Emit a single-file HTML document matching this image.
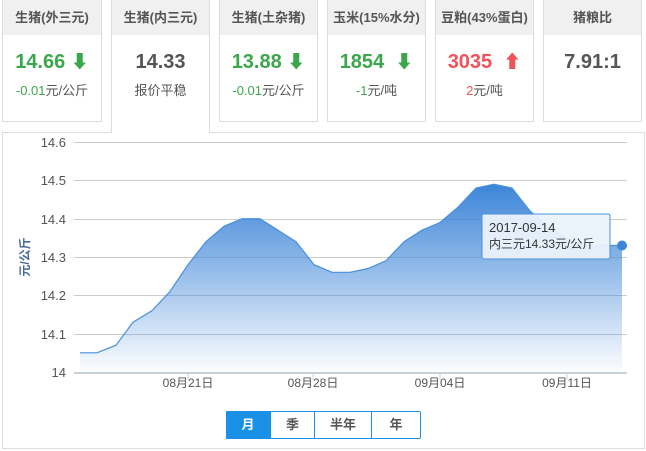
<!DOCTYPE html>
<html><head><meta charset="utf-8"><style>
body{margin:0;width:646px;height:451px;background:#fff;font-family:"Liberation Sans","Noto Sans CJK SC",sans-serif;position:relative;overflow:hidden}
.card{position:absolute;top:0;height:122px;border:1px solid #ddd;border-top:none;background:#fff;text-align:center;box-sizing:border-box}
.card .h{height:35px;background:#f0f0f0;line-height:36px;font-size:13px;font-weight:bold;color:#555}
.card .v{margin-top:13px;font-size:20px;font-weight:bold;height:28px;line-height:28px}
.card .s{font-size:13px;color:#555;margin-top:4px}
.g{color:#3aa84a}.r{color:#f0535a}.k{color:#555}
.sel{height:133px;border-bottom:none;z-index:2}
.box{position:absolute;left:2px;top:132px;width:643px;height:317px;border:1px solid #ddd;box-sizing:border-box}
.btns{position:absolute;left:226px;top:411px;height:28px;display:flex;border:1px solid #1a90e6;border-radius:2px;box-sizing:border-box;width:195px}
.btns div{text-align:center;line-height:26px;font-size:13px;font-weight:bold;color:#555;border-right:1px solid #1a90e6;box-sizing:border-box}
</style></head><body>
<div class="card" style="left:2px;width:100px"><div class="h">生猪(外三元)</div><div class="v g">14.66 <span style="font-size:18px">⬇</span></div><div class="s"><span class="g">-0.01</span>元/公斤</div></div>
<div class="card sel" style="left:111px;width:99px"><div class="h">生猪(内三元)</div><div class="v k">14.33</div><div class="s">报价平稳</div></div>
<div class="card" style="left:219px;width:99px"><div class="h">生猪(土杂猪)</div><div class="v g">13.88 <span style="font-size:18px">⬇</span></div><div class="s"><span class="g">-0.01</span>元/公斤</div></div>
<div class="card" style="left:327px;width:99px"><div class="h">玉米(15%水分)</div><div class="v g">1854 &nbsp;<span style="font-size:18px">⬇</span></div><div class="s"><span class="g">-1</span>元/吨</div></div>
<div class="card" style="left:435px;width:99px"><div class="h">豆粕(43%蛋白)</div><div class="v r">3035 &nbsp;<span style="font-size:18px">⬆</span></div><div class="s"><span class="r">2</span>元/吨</div></div>
<div class="card" style="left:543px;width:99px"><div class="h">猪粮比</div><div class="v k">7.91:1</div></div>
<div class="box"></div>
<svg width="646" height="451" style="position:absolute;left:0;top:0;z-index:3" font-family="Liberation Sans,Noto Sans CJK SC,sans-serif">
<defs><linearGradient id="gr" x1="0" y1="0" x2="0" y2="1"><stop offset="0" stop-color="#3d85d8"/><stop offset="1" stop-color="#3d85d8" stop-opacity="0.02"/></linearGradient></defs>
<g stroke="#ccc" stroke-width="1">
<line x1="74" y1="142.5" x2="627" y2="142.5"/><line x1="74" y1="180.5" x2="627" y2="180.5"/><line x1="74" y1="219.5" x2="627" y2="219.5"/><line x1="74" y1="257.5" x2="627" y2="257.5"/><line x1="74" y1="295.5" x2="627" y2="295.5"/><line x1="74" y1="334.5" x2="627" y2="334.5"/><line x1="74" y1="372.5" x2="627" y2="372.5"/>
</g>
<g font-size="13" fill="#555" text-anchor="end"><text x="66" y="147">14.6</text><text x="66" y="185">14.5</text><text x="66" y="224">14.4</text><text x="66" y="262">14.3</text><text x="66" y="300">14.2</text><text x="66" y="339">14.1</text><text x="66" y="377">14</text></g>
<text transform="translate(29,257) rotate(-90)" text-anchor="middle" font-size="12" font-weight="bold" fill="#4a6a9a">元/公斤</text>
<path d="M80,372 L80,352.8 L97,352.8 L116,345.2 L133,322.2 L152,310.7 L170,291.5 L188,264.7 L206,241.7 L224,226.3 L242,218.7 L260,218.7 L278,230.2 L296,241.7 L314,264.7 L332,272.3 L350,272.3 L368,268.5 L386,260.8 L404,241.7 L422,230.2 L440,222.5 L458,207.2 L476,188 L494,184.2 L512,188 L530,211 L548,226.3 L566,237.8 L584,245.5 L602,245.5 L622,245.5 L622,372 Z" fill="url(#gr)"/>
<path d="M80,352.8 L97,352.8 L116,345.2 L133,322.2 L152,310.7 L170,291.5 L188,264.7 L206,241.7 L224,226.3 L242,218.7 L260,218.7 L278,230.2 L296,241.7 L314,264.7 L332,272.3 L350,272.3 L368,268.5 L386,260.8 L404,241.7 L422,230.2 L440,222.5 L458,207.2 L476,188 L494,184.2 L512,188 L530,211 L548,226.3 L566,237.8 L584,245.5 L602,245.5 L622,245.5" fill="none" stroke="#4a8fdc" stroke-width="1.2"/>
<line x1="74" y1="373" x2="627" y2="373" stroke="#c8d0da" stroke-width="2"/>
<g stroke="#c8d0da"><line x1="188" y1="374" x2="188" y2="380"/><line x1="313" y1="374" x2="313" y2="380"/><line x1="440" y1="374" x2="440" y2="380"/><line x1="567" y1="374" x2="567" y2="380"/></g>
<g font-size="12" fill="#555" text-anchor="middle"><text x="188" y="387">08月21日</text><text x="313" y="387">08月28日</text><text x="440" y="387">09月04日</text><text x="567" y="387">09月11日</text></g>
<circle cx="622" cy="245.5" r="5" fill="#3d85d8"/>
<rect x="482" y="214" width="128" height="45" rx="2" fill="#eaf2fb" fill-opacity="0.95" stroke="#4a8fdc"/>
<text x="489" y="232" font-size="13" fill="#333">2017-09-14</text>
<text x="489" y="248" font-size="12" fill="#333">内三元14.33元/公斤</text>
</svg>
<div class="btns"><div style="width:45px;background:#1a90e6;color:#fff;margin:-1px 0 -1px -1px;line-height:28px">月</div><div style="width:44px">季</div><div style="width:57px">半年</div><div style="width:48px;border-right:none">年</div></div>
</body></html>
